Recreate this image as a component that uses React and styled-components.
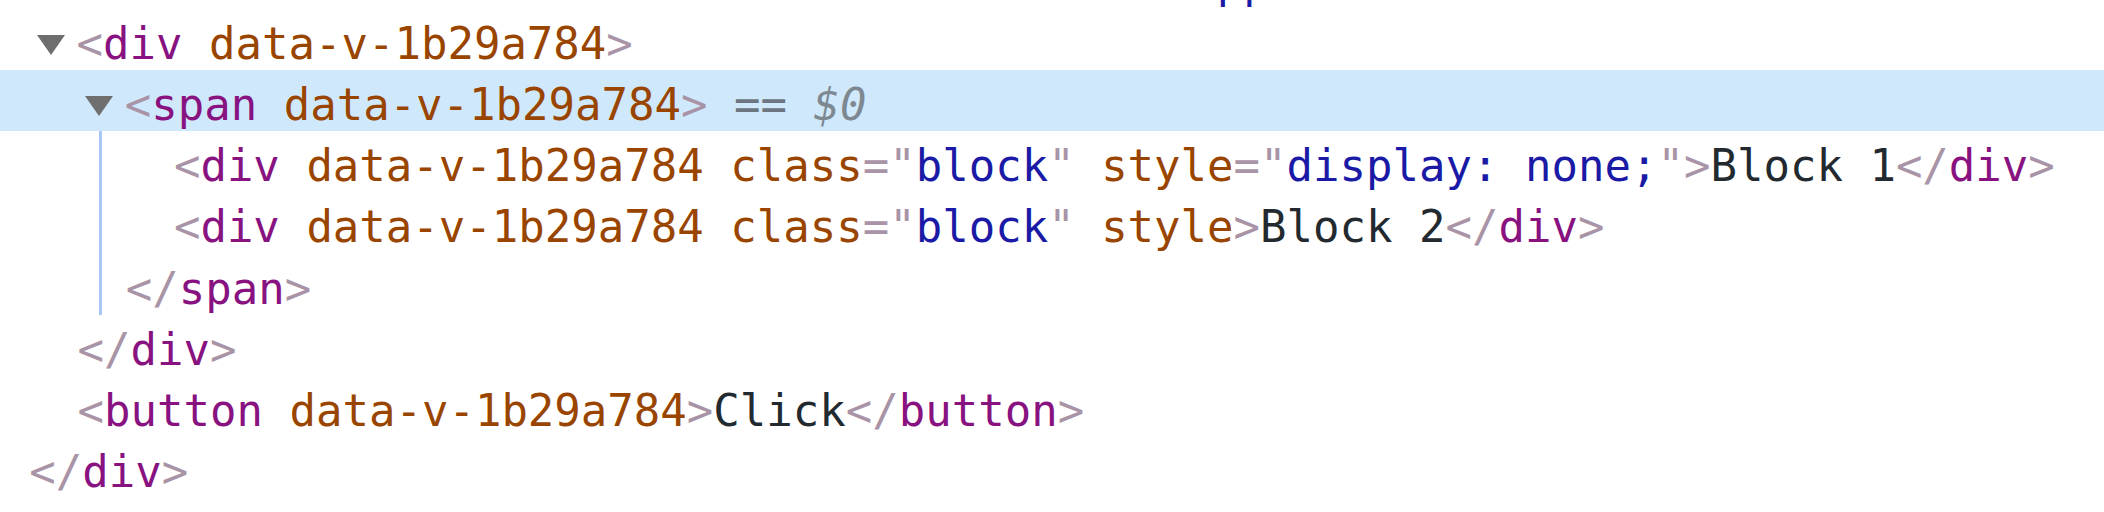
import React from "react";
import styled, { createGlobalStyle } from "styled-components";

const Global = createGlobalStyle`
  html, body { margin: 0; padding: 0; background: #ffffff; }
  body { overflow: hidden; }
`;

const LINE = 61.2;
const BASE = 29.3;
const STEP = 48.2;

const Tree = styled.div`
  font-family: "DejaVu Sans Mono", "Liberation Mono", monospace;
  font-size: 44px;
  line-height: ${LINE}px;
  color: #202124;
  margin-top: ${8.8 - LINE}px;
  width: 2104px;
`;

const Row = styled.div`
  display: flex;
  align-items: flex-start;
  height: ${LINE}px;
  padding-left: ${(p) => BASE + p.$level * STEP}px;
  background: ${(p) => (p.$selected ? "#cfe8fc" : "transparent")};
  white-space: pre;
  overflow: hidden;
`;

const Code = styled.span`
  display: block;
  padding-top: 4px;
`;

const Twisty = styled.span`
  flex: none;
  width: 0;
  height: 0;
  margin-left: -40.5px;
  margin-right: 11.5px;
  margin-top: 26px;
  border-left: 14.5px solid transparent;
  border-right: 14.5px solid transparent;
  border-top: 20px solid #6e6e6e;
`;

const Children = styled.div`
  position: relative;
  &::before {
    content: "";
    position: absolute;
    left: 98.5px;
    top: 0;
    bottom: 0;
    width: 3px;
    background: #a9c7f5;
  }
`;

const Punct = styled.span`
  color: #a894a6;
`;
const TagName = styled.span`
  color: #881280;
`;
const AttrName = styled.span`
  color: #994500;
`;
const AttrValue = styled.span`
  color: #1a1aa6;
`;
const TextNode = styled.span`
  color: #222a30;
`;
const Hint = styled.span`
  color: #6b7680;
`;
const HintVar = styled.span`
  color: #7d8891;
  font-style: italic;
`;

const Attr = ({ name, value }) => (
  <>
    {" "}
    <AttrName>{name}</AttrName>
    {value !== undefined && (
      <>
        <Punct>="</Punct>
        <AttrValue>{value}</AttrValue>
        <Punct>"</Punct>
      </>
    )}
  </>
);

const Open = ({ tag, attrs }) => (
  <>
    <Punct>&lt;</Punct>
    <TagName>{tag}</TagName>
    {attrs.map((a, i) => (
      <Attr key={i} name={a[0]} value={a[1]} />
    ))}
    <Punct>&gt;</Punct>
  </>
);

const Close = ({ tag }) => (
  <>
    <Punct>&lt;/</Punct>
    <TagName>{tag}</TagName>
    <Punct>&gt;</Punct>
  </>
);

const V = ["data-v-1b29a784"];

export default function App() {
  return (
    <>
      <Global />
      <Tree>
        <Row $level={1}>
          <Code>
            <Open tag="div" attrs={[V, ["class", "demo-box"], ["id", "app"]]} />
          </Code>
        </Row>
        <Row $level={1}>
          <Twisty />
          <Code>
            <Open tag="div" attrs={[V]} />
          </Code>
        </Row>
        <Row $level={2} $selected>
          <Twisty />
          <Code>
            <Open tag="span" attrs={[V]} />
            {" "}
            <Hint>==</Hint> <HintVar>$0</HintVar>
          </Code>
        </Row>
        <Children>
          <Row $level={3}>
            <Code>
              <Open
                tag="div"
                attrs={[V, ["class", "block"], ["style", "display: none;"]]}
              />
              <TextNode>Block 1</TextNode>
              <Close tag="div" />
            </Code>
          </Row>
          <Row $level={3}>
            <Code>
              <Open tag="div" attrs={[V, ["class", "block"], ["style"]]} />
              <TextNode>Block 2</TextNode>
              <Close tag="div" />
            </Code>
          </Row>
          <Row $level={2}>
            <Code>
              <Close tag="span" />
            </Code>
          </Row>
        </Children>
        <Row $level={1}>
          <Code>
            <Close tag="div" />
          </Code>
        </Row>
        <Row $level={1}>
          <Code>
            <Open tag="button" attrs={[V]} />
            <TextNode>Click</TextNode>
            <Close tag="button" />
          </Code>
        </Row>
        <Row $level={0}>
          <Code>
            <Close tag="div" />
          </Code>
        </Row>
      </Tree>
    </>
  );
}
